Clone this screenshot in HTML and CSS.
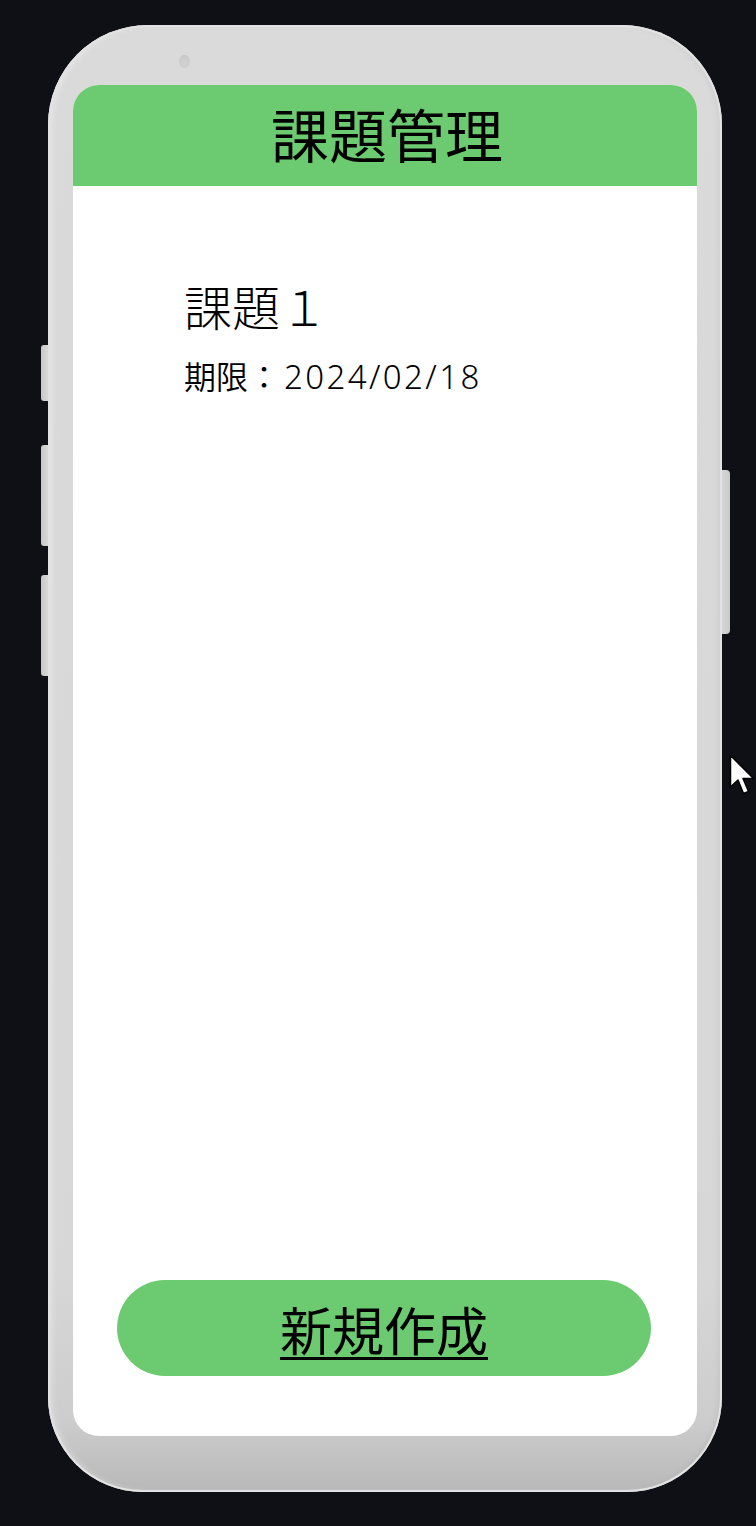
FILE: index.html
```html
<!DOCTYPE html>
<html lang="ja">
<head>
<meta charset="utf-8">
<title>課題管理</title>
<link rel="stylesheet" href="styles.css">
</head>
<body>
<div class="stage">
  <div class="phone">
    <span class="side side-l1"></span>
    <span class="side side-l2"></span>
    <span class="side side-l3"></span>
    <span class="side side-r1"></span>
    <span class="camera"></span>
    <div class="screen">
      <header class="header"><h1 class="title">課題管理</h1></header>
      <main class="content">
        <div class="task">
          <div class="task-name">課題１</div>
          <div class="task-due">期限：<span class="due-date">2024/02/18</span></div>
        </div>
      </main>
      <div class="actions">
        <a class="new-btn" href="#">新規作成</a>
      </div>
    </div>
  </div>
  <svg class="cursor" width="28" height="44" viewBox="0 0 28 44">
    <path d="M1.5 1.5 L1.5 33 L9 26 L14.5 39.5 L19.5 37.5 L14 24.5 L24.5 24.5 Z" fill="#ffffff" stroke="#000000" stroke-width="1.5" stroke-linejoin="round"/>
  </svg>
</div>
</body>
</html>
```
FILE: styles.css
```css
html, body {
  margin: 0;
  padding: 0;
  background: #0f1016;
}
body {
  font-family: "Noto Sans", "Noto Sans CJK JP", sans-serif;
  color: #000;
}
.stage {
  position: relative;
  width: 756px;
  height: 1526px;
  padding: 25px 0 0 48px;
  box-sizing: border-box;
}
.phone {
  position: relative;
  width: 674px;
  height: 1467px;
  box-sizing: border-box;
  padding: 60px 25px 56px 25px;
  border-radius: 100px 100px 95px 95px;
  background: linear-gradient(to bottom, #dadada 0%, #d7d7d7 85%, #cdcdcd 95%, #b8b8b8 100%);
  box-shadow: inset 0 0 0 2px #e2e2e2, inset 4px 0 6px rgba(255,255,255,0.35), inset -4px 0 6px rgba(0,0,0,0.05);
}
.side {
  position: absolute;
  width: 7px;
  background: linear-gradient(to right, #c8c8c8, #d8d8d8);
  border-radius: 3px 0 0 3px;
}
.side-l1 { left: -7px; top: 320px; height: 56px; }
.side-l2 { left: -7px; top: 420px; height: 101px; }
.side-l3 { left: -7px; top: 550px; height: 101px; }
.side-r1 {
  right: -8px; top: 445px; height: 164px; width: 8px;
  border-radius: 0 4px 4px 0;
  background: linear-gradient(to right, #d6d6d6, #c9c9c9);
}
.camera {
  position: absolute;
  left: 131px;
  top: 30px;
  width: 11px;
  height: 13px;
  border-radius: 50%;
  background: radial-gradient(circle at 50% 60%, #d2d2d2 0%, #cbcbcb 60%, #b9b9b9 100%);
}
.screen {
  height: 100%;
  background: #ffffff;
  border-radius: 26px;
  overflow: hidden;
  display: flex;
  flex-direction: column;
}
.header {
  height: 101px;
  background: #6cca70;
  display: flex;
  align-items: center;
  justify-content: center;
  flex-shrink: 0;
}
.title {
  margin: 0;
  font-family: "Noto Sans CJK JP", sans-serif;
  font-weight: 400;
  font-size: 58px;
  line-height: 1;
  padding: 0 0 6px 4px;
}
.content {
  flex: 1;
  padding: 86px 0 0 111px;
}
.task-name {
  font-family: "Noto Sans CJK JP", sans-serif;
  font-weight: 300;
  font-size: 48px;
  line-height: 66px;
}
.task-due {
  font-weight: 350;
  font-size: 32px;
  line-height: 44px;
  margin-top: 17px;
}
.due-date {
  font-size: 33px;
  letter-spacing: 2.4px;
  margin-left: 4px;
}
.actions {
  padding: 0 46px 60px 44px;
}
.new-btn {
  display: flex;
  align-items: center;
  justify-content: center;
  height: 96px;
  border-radius: 48px;
  background: #6cca70;
  color: #000;
  font-family: "Noto Sans CJK JP", sans-serif;
  font-size: 52px;
  text-decoration: underline;
  text-decoration-thickness: 3px;
  text-underline-offset: 6px;
}
.cursor {
  position: absolute;
  left: 729px;
  top: 754px;
}
```
